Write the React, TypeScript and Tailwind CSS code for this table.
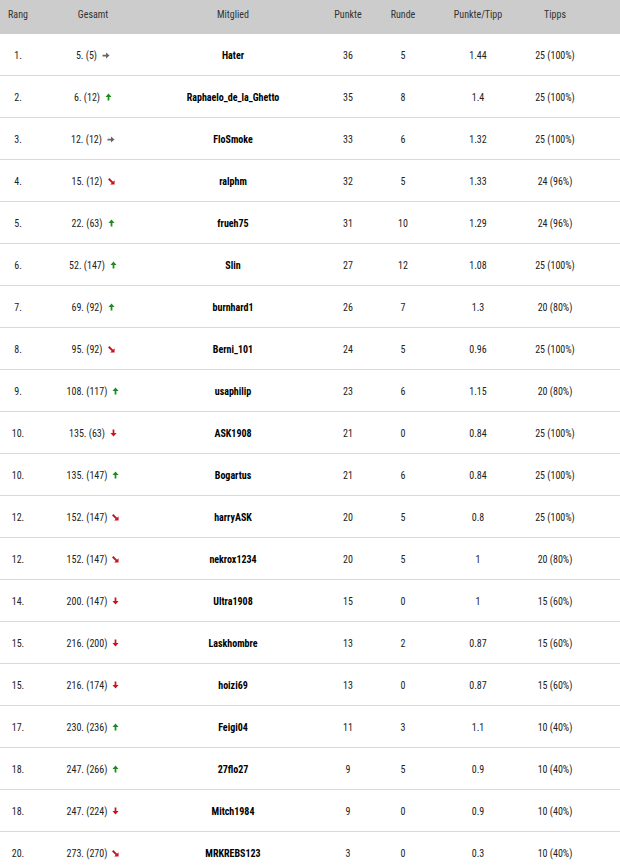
import { ReactNode } from "react";

type Trend = "up" | "down" | "downright" | "right";

const ROWS: [string, string, Trend, string, number, number, string, string][] = [
  ["1.", "5. (5)", "right", "Hater", 36, 5, "1.44", "25 (100%)"],
  ["2.", "6. (12)", "up", "Raphaelo_de_la_Ghetto", 35, 8, "1.4", "25 (100%)"],
  ["3.", "12. (12)", "right", "FloSmoke", 33, 6, "1.32", "25 (100%)"],
  ["4.", "15. (12)", "downright", "ralphm", 32, 5, "1.33", "24 (96%)"],
  ["5.", "22. (63)", "up", "frueh75", 31, 10, "1.29", "24 (96%)"],
  ["6.", "52. (147)", "up", "Slin", 27, 12, "1.08", "25 (100%)"],
  ["7.", "69. (92)", "up", "burnhard1", 26, 7, "1.3", "20 (80%)"],
  ["8.", "95. (92)", "downright", "Berni_101", 24, 5, "0.96", "25 (100%)"],
  ["9.", "108. (117)", "up", "usaphilip", 23, 6, "1.15", "20 (80%)"],
  ["10.", "135. (63)", "down", "ASK1908", 21, 0, "0.84", "25 (100%)"],
  ["10.", "135. (147)", "up", "Bogartus", 21, 6, "0.84", "25 (100%)"],
  ["12.", "152. (147)", "downright", "harryASK", 20, 5, "0.8", "25 (100%)"],
  ["12.", "152. (147)", "downright", "nekrox1234", 20, 5, "1", "20 (80%)"],
  ["14.", "200. (147)", "down", "Ultra1908", 15, 0, "1", "15 (60%)"],
  ["15.", "216. (200)", "down", "Laskhombre", 13, 2, "0.87", "15 (60%)"],
  ["15.", "216. (174)", "down", "hoizi69", 13, 0, "0.87", "15 (60%)"],
  ["17.", "230. (236)", "up", "Feigi04", 11, 3, "1.1", "10 (40%)"],
  ["18.", "247. (266)", "up", "27flo27", 9, 5, "0.9", "10 (40%)"],
  ["18.", "247. (224)", "down", "Mitch1984", 9, 0, "0.9", "10 (40%)"],
  ["20.", "273. (270)", "downright", "MRKREBS123", 3, 0, "0.3", "10 (40%)"],
];

const TrendIcon = ({ trend }: { trend: Trend }) => {
  if (trend === "up")
    return (
      <svg width="7" height="8" viewBox="0 0 8 9" className="text-[#1e8a1e]">
        <path d="M4 0.5 L7.5 4.5 L5 4.5 L5 8.5 L3 8.5 L3 4.5 L0.5 4.5 Z" fill="currentColor" />
      </svg>
    );
  if (trend === "down")
    return (
      <svg width="7" height="8" viewBox="0 0 8 9" className="text-[#c8141e]">
        <path d="M4 8.5 L7.5 4.5 L5 4.5 L5 0.5 L3 0.5 L3 4.5 L0.5 4.5 Z" fill="currentColor" />
      </svg>
    );
  if (trend === "downright")
    return (
      <svg width="7" height="7" viewBox="0 0 8 8" className="text-[#c8141e]">
        <path d="M7.5 7.5 L7.5 2.5 L5.8 4.2 L1.6 0 L0 1.6 L4.2 5.8 L2.5 7.5 Z" fill="currentColor" />
      </svg>
    );
  return (
    <svg width="8" height="7" viewBox="0 0 9 8" className="text-[#666]">
      <path d="M8.5 4 L4.5 0.5 L4.5 3 L0.5 3 L0.5 5 L4.5 5 L4.5 7.5 Z" fill="currentColor" />
    </svg>
  );
};

const cols = "grid grid-cols-[36px_114px_166px_64px_46px_104px_50px_40px]";

const Cell = ({ children, className = "" }: { children?: ReactNode; className?: string }) => (
  <div className={`flex items-center justify-center whitespace-nowrap ${className}`}>{children}</div>
);

export default function App() {
  return (
    <div className="w-[620px] h-[868px] overflow-hidden bg-white text-[10px] text-[#222] font-['Roboto_Condensed','Liberation_Sans_Narrow','DejaVu_Sans_Condensed',Roboto,sans-serif] font-stretch-condensed">
      <div className={`${cols} h-[34px] bg-[#cccccc] text-[#333] pb-[6px]`}>
        <Cell>Rang</Cell>
        <Cell>Gesamt</Cell>
        <Cell>Mitglied</Cell>
        <Cell>Punkte</Cell>
        <Cell>Runde</Cell>
        <Cell>Punkte/Tipp</Cell>
        <Cell>Tipps</Cell>
        <Cell />
      </div>
      {ROWS.map(([rang, gesamt, trend, name, punkte, runde, ppt, tipps], i) => (
        <div key={i} className={`${cols} h-[42px] border-b border-[#dadada] pt-[1px]`}>
          <Cell>{rang}</Cell>
          <Cell className="gap-[5px]">
            <span>{gesamt}</span>
            <TrendIcon trend={trend} />
          </Cell>
          <Cell className="font-bold text-black">{name}</Cell>
          <Cell>{punkte}</Cell>
          <Cell>{runde}</Cell>
          <Cell>{ppt}</Cell>
          <Cell>{tipps}</Cell>
          <Cell />
        </div>
      ))}
    </div>
  );
}
